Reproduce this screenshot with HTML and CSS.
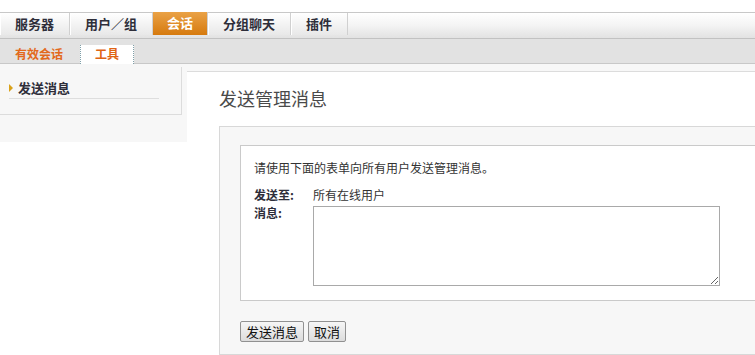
FILE: index.html
```html
<!DOCTYPE html>
<html lang="zh">
<head>
<meta charset="utf-8">
<title>发送管理消息</title>
<link rel="stylesheet" href="styles.css">
</head>
<body>
<div class="topgap"></div>
<nav class="mainnav">
  <a class="tab">服务器</a>
  <a class="tab">用户／组</a>
  <a class="tab active">会话</a>
  <a class="tab">分组聊天</a>
  <a class="tab">插件</a>
</nav>
<nav class="subnav">
  <a class="subtab">有效会话</a>
  <a class="subtab current">工具</a>
</nav>
<div class="content">
  <aside class="sidebar">
    <div class="sidebox">
      <div class="sideitem"><span class="tri"></span>发送消息</div>
    </div>
  </aside>
  <main class="main">
    <div class="panel">
      <h1 class="title">发送管理消息</h1>
      <div class="outerbox">
        <div class="innerbox">
          <p class="intro">请使用下面的表单向所有用户发送管理消息。</p>
          <div class="formgrid">
            <span class="label">发送至:</span>
            <span class="value">所有在线用户</span>
            <span class="label">消息:</span>
            <textarea class="msg"></textarea>
          </div>
        </div>
        <div class="buttons">
          <button class="btn">发送消息</button>
          <button class="btn">取消</button>
        </div>
      </div>
    </div>
  </main>
</div>
</body>
</html>
```
FILE: styles.css
```css
html, body {
  margin: 0;
  padding: 0;
  background: #fff;
  overflow: hidden;
  font-family: "Noto Sans CJK SC", "Noto Sans", sans-serif;
  color: #333;
}
.topgap { height: 12px; }
.mainnav {
  display: flex;
  height: 25px;
  border-top: 1px solid #c8c8c8;
  border-bottom: 1px solid #c2c2c2;
  background: linear-gradient(#ffffff 0%, #f4f4f4 50%, #e2e2e2 100%);
}
.tab {
  display: block;
  height: 22px;
  line-height: 22px;
  padding: 0 15px;
  font-size: 13px;
  font-weight: bold;
  color: #2e2e3a;
  border-right: 1px solid #d0d0d0;
  box-shadow: inset 1px 0 0 #fff;
  background: linear-gradient(#ffffff, #e8e8e8);
}
.tab.active {
  padding: 0 14px;
  color: #fff;
  background: linear-gradient(#eaa246, #d67a0e);
  box-shadow: none;
  margin-top: -1px;
  height: 23px;
}
.subnav {
  display: flex;
  align-items: flex-end;
  gap: 2px;
  height: 24px;
  background: #e2e2e2;
  border-bottom: 1px solid #c8c8c8;
}
.subtab {
  display: block;
  height: 18px;
  line-height: 18px;
  padding: 0 14px;
  font-size: 12px;
  font-weight: bold;
  color: #e2691c;
  border-left: 1px dotted transparent;
  border-right: 1px dotted transparent;
}
.subtab.current {
  background: #fff;
  border-left-color: #7f9fa8;
  border-right-color: #7f9fa8;
  height: 19px;
  margin-bottom: -1px;
  color: #e06414;
}
.content {
  display: flex;
  align-items: flex-start;
}
.sidebar {
  position: relative;
  z-index: 1;
  flex: 0 0 187px;
  height: 75px;
  padding-top: 3px;
  background: #f7f7f7;
}
.sidebox {
  width: 172px;
  padding: 10px 0 15px 9px;
  border-right: 1px solid #dcdcdc;
  border-bottom: 1px solid #dcdcdc;
}
.sideitem {
  width: 141px;
  height: 21px;
  line-height: 21px;
  padding-left: 9px;
  font-size: 13px;
  font-weight: bold;
  color: #2e2e3a;
  border-bottom: 1px solid #dedede;
  position: relative;
}
.tri {
  position: absolute;
  left: 0;
  top: 7px;
  width: 0;
  height: 0;
  border-top: 4px solid transparent;
  border-bottom: 4px solid transparent;
  border-left: 4px solid #d9a21a;
}
.main {
  flex: 1;
  margin-left: -4px;
  padding-top: 7px;
  background: linear-gradient(#f7f7f7 8px, #fff 8px);
  min-width: 0;
  overflow: hidden;
}
.panel {
  background: #fff;
  border-top: 1px solid #dcdcdc;
  border-top-left-radius: 4px;
  padding: 14px 0 20px 36px;
}
.title {
  margin: 0 0 16px 0;
  font-size: 18px;
  line-height: 24px;
  font-weight: normal;
  color: #4a4a4a;
}
.outerbox {
  width: 620px;
  background: #f7f7f7;
  border: 1px solid #d8d8d8;
  padding: 18px 0 12px 20px;
}
.innerbox {
  background: #fff;
  border: 1px solid #cacaca;
  padding: 13px 0 14px 13px;
}
.intro {
  margin: 0 0 9px 0;
  font-size: 12px;
  line-height: 18px;
}
.formgrid {
  display: grid;
  grid-template-columns: 59px auto;
  justify-content: start;
  align-items: start;
  font-size: 12px;
  line-height: 18px;
}
.label {
  font-weight: bold;
  color: #2e2e3a;
}
.msg {
  box-sizing: border-box;
  width: 407px;
  height: 80px;
  margin: 2px 0 0 0;
  padding: 0;
  border: 1px solid #a9a9a9;
  border-radius: 0;
  background: #fff;
}
.buttons {
  display: flex;
  gap: 4px;
  margin-top: 20px;
}
.btn {
  font-family: "Noto Sans CJK SC", sans-serif;
  font-size: 13px;
  line-height: 17px;
  height: 21px;
  padding: 0 5px;
  color: #111;
  background: linear-gradient(#f6f6f6, #dcdcdc);
  border: 1px solid #919191;
  border-radius: 2px;
}
```
